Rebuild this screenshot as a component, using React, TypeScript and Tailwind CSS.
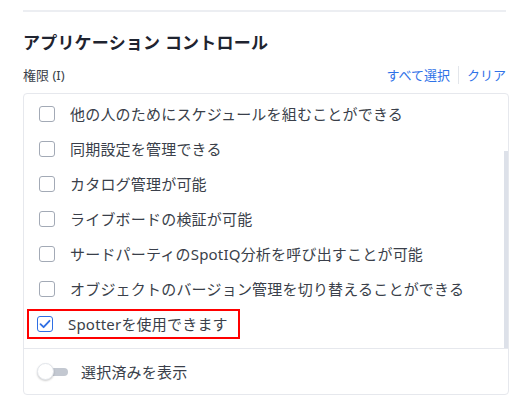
import { useState } from "react";

const permissions = [
  { label: "他の人のためにスケジュールを組むことができる", checked: false },
  { label: "同期設定を管理できる", checked: false },
  { label: "カタログ管理が可能", checked: false },
  { label: "ライブボードの検証が可能", checked: false },
  { label: "サードパーティのSpotIQ分析を呼び出すことが可能", checked: false },
  { label: "オブジェクトのバージョン管理を切り替えることができる", checked: false },
  { label: "Spotterを使用できます", checked: true, highlight: true },
];

function Checkbox({ checked }: { checked: boolean }) {
  return (
    <span
      className={`w-4 h-4 shrink-0 rounded-[3px] border flex items-center justify-center bg-white ${
        checked ? "border-[#2f6fe4]" : "border-[#a3aab6]"
      }`}
    >
      {checked && (
        <svg width="12" height="10" viewBox="0 0 12 10" fill="none">
          <path d="M1.5 5.2 L4.6 8.2 L10.5 1.8" stroke="#2f6fe4" strokeWidth="1.8" strokeLinecap="round" strokeLinejoin="round" />
        </svg>
      )}
    </span>
  );
}

export default function App() {
  const [items, setItems] = useState(permissions);
  const [showSelected, setShowSelected] = useState(false);

  return (
    <div className="w-[527px] h-[414px] bg-white overflow-hidden font-['Noto_Sans','Noto_Sans_CJK_JP',sans-serif] text-[#2b303b]">
      <div className="pl-[23px] pr-[18px] pt-[10px]">
        <div className="h-[2px] bg-[#eceef2] mr-[3px]" />

        <h2 className="mt-[19px] text-[17px] leading-[24px] font-bold text-[#1f2430] tracking-[0.2px]">
          アプリケーション コントロール
        </h2>

        {/* Label row */}
        <div className="mt-[11px] flex items-center justify-between text-[13px] leading-[18px] pr-[3px]">
          <span className="text-[#3a3f4a]">権限 (I)</span>
          <div className="flex items-center">
            <button className="text-[#2f72e8]">すべて選択</button>
            <span className="mx-[8px] w-px h-[18px] bg-[#e3e6eb]" />
            <button className="text-[#2f72e8]">クリア</button>
          </div>
        </div>

        {/* Permission box */}
        <div className="mt-[9px] border border-[#e6e8ed] rounded-[4px] flex flex-col">
          <div className="flex">
            <ul className="flex-1 pt-[2px] pb-[7px] pl-[3px]">
              {items.map((p, i) => (
                <li key={p.label} className="h-[35px] flex items-center">
                  <label
                    onClick={() =>
                      setItems((prev) => prev.map((x, j) => (j === i ? { ...x, checked: !x.checked } : x)))
                    }
                    className={`flex items-center h-[30px] cursor-pointer ${
                      p.highlight ? "border-2 border-[#f00] pl-[8px] pr-[10px]" : "pl-[10px] border-2 border-transparent"
                    }`}
                  >
                    <Checkbox checked={p.checked} />
                    <span className="ml-[15px] text-[15px] leading-[20px] text-[#3a3f4a] tracking-[0.2px] whitespace-nowrap">
                      {p.label}
                    </span>
                  </label>
                </li>
              ))}
            </ul>
            {/* scrollbar */}
            <div className="w-[4px] flex flex-col pt-[57px]">
              <div className="flex-1 bg-[#dde1e9]" />
            </div>
          </div>

          <div className="border-t border-[#e6e8ed] h-[46px] flex items-center pl-[13px]">
            <button onClick={() => setShowSelected(!showSelected)} className="relative w-[31px] h-[17px] flex items-center">
              <span className="absolute left-[6px] right-0 h-[8px] rounded-full bg-[#c3c8d1]" />
              <span className="relative w-[17px] h-[17px] rounded-full bg-white border border-[#e3e6eb] shadow-[0_1px_2px_rgba(0,0,0,0.2)]" />
            </button>
            <span className="ml-[13px] text-[15px] leading-[20px] text-[#3a3f4a] tracking-[0.2px]">選択済みを表示</span>
          </div>
        </div>
      </div>
    </div>
  );
}
